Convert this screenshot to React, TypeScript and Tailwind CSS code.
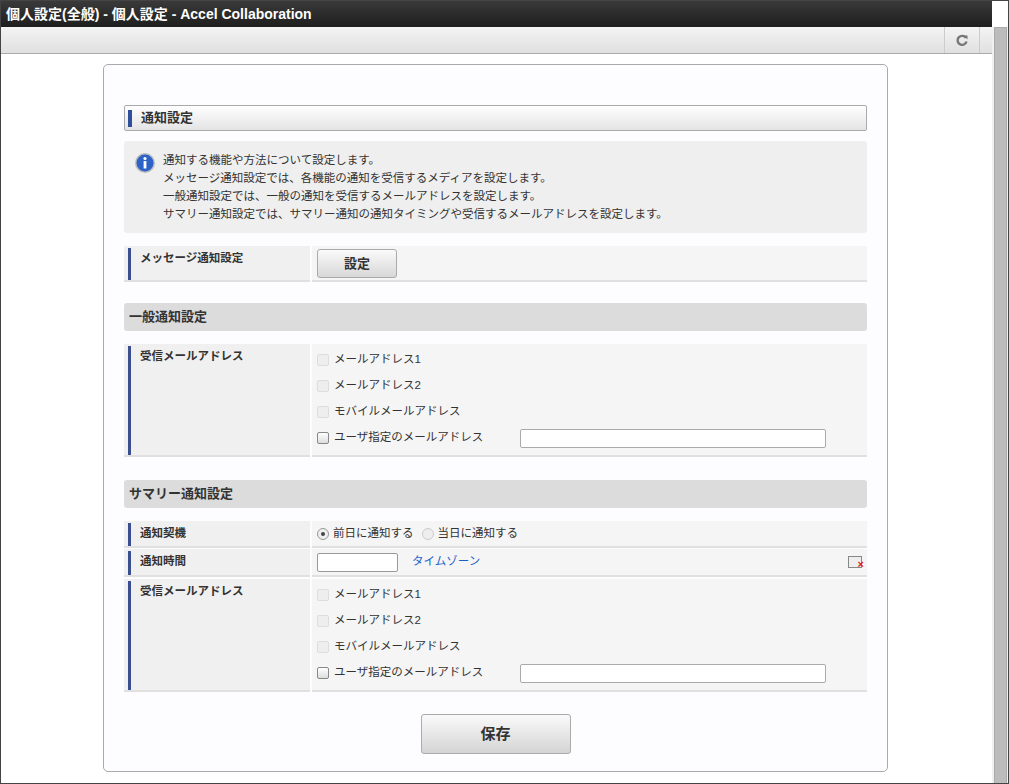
import React from "react";

const F = { fontFamily: '"Liberation Sans","Noto Sans CJK JP",sans-serif' };

function Label({ children, h }: { children: React.ReactNode; h: string }) {
  return (
    <div className={`w-[186px] shrink-0 bg-[#f0f0f0] border-b-2 border-[#e0e0e0] pl-[4px] pt-[2px] ${h}`}>
      <div className="border-l-[3px] border-[#3b4f8e] h-full pl-[9px] pt-[2px] font-bold text-[11.5px] text-[#333]">{children}</div>
    </div>
  );
}

function Check({ label, active }: { label: string; active?: boolean }) {
  return (
    <div className="flex items-center h-[26px] gap-[5px]">
      <span className={`w-[12px] h-[12px] rounded-[2px] border ${active ? "border-[#888] bg-gradient-to-b from-white to-[#ddd]" : "border-[#ddd] bg-[#eee]"}`} />
      <span className="text-[11.5px] text-[#333]">{label}</span>
    </div>
  );
}

function EmailBlock() {
  return (
    <div className="flex">
      <Label h="h-[113px]">受信メールアドレス</Label>
      <div className="flex-1 ml-[2px] bg-[#f5f5f5] border-b-2 border-[#e0e0e0] pl-[5px] pt-[3px]">
        <Check label="メールアドレス1" />
        <Check label="メールアドレス2" />
        <Check label="モバイルメールアドレス" />
        <div className="flex items-center">
          <Check label="ユーザ指定のメールアドレス" active />
          <input className="ml-[37px] w-[306px] h-[19px] bg-white border border-[#aaa] rounded-[2px]" />
        </div>
      </div>
    </div>
  );
}

function Section({ children }: { children: React.ReactNode }) {
  return (
    <div className="h-[28px] bg-[#dcdcdc] rounded-[3px] flex items-center pl-[5px] font-bold text-[13px] text-[#333]">{children}</div>
  );
}

export default function App() {
  return (
    <div style={F} className="w-[1009px] h-[784px] border border-[#444] flex flex-col overflow-hidden bg-white relative">
      <div className="h-[26px] bg-gradient-to-b from-[#3a3a3a] to-[#1e1e1e] text-white text-[14px] font-bold flex items-center pl-[5px] mr-[16px]">
        個人設定(全般) - 個人設定 - Accel Collaboration
      </div>
      <div className="flex flex-1 min-h-0">
        <div className="flex-1 flex flex-col">
          <div className="h-[27px] bg-gradient-to-b from-[#f4f4f4] to-[#e0e0e0] border-b border-[#aaa] flex justify-end">
            <div className="w-[36px] border-l border-r border-[#ccc] mr-[12px] flex items-center justify-center">
              <svg width="12" height="12" viewBox="0 0 12 12"><path d="M10 4A4.5 4.5 0 1 0 10.5 7.5" fill="none" stroke="#777" strokeWidth="2.4"/><path d="M7.5 1.5L11.5 1.5L11.5 5.5Z" fill="#777"/></svg>
            </div>
          </div>
          <div className="flex-1 pl-[102px] pt-[10px]">
            <div className="w-[785px] h-[708px] border border-[#aaa] rounded-[5px] bg-[#fdfdff] px-[20px] pt-[40px]">
              <div className="h-[26px] border border-[#aaa] rounded-[2px] bg-gradient-to-b from-white to-[#e4e4e4] flex items-center">
                <div className="w-[4px] h-[17px] bg-[#2f4f9a] ml-[3px]" />
                <span className="ml-[9px] text-[13px] font-bold text-[#333]">通知設定</span>
              </div>
              <div className="mt-[10px] h-[92px] bg-[#efefef] rounded-[3px] flex pl-[10px] pt-[10px] gap-[7px] text-[11.5px] leading-[18px] text-[#333]">
                <svg width="22" height="22" viewBox="0 0 22 22" className="shrink-0 mt-[1px]">
                  <circle cx="11" cy="11" r="10" fill="#bbb" />
                  <circle cx="11" cy="11" r="8.5" fill="#2d62c8" />
                  <circle cx="11" cy="6.5" r="1.6" fill="#fff" />
                  <rect x="9.6" y="9" width="2.8" height="7.5" fill="#fff" />
                </svg>
                <div>
                  <div>通知する機能や方法について設定します。</div>
                  <div>メッセージ通知設定では、各機能の通知を受信するメディアを設定します。</div>
                  <div>一般通知設定では、一般の通知を受信するメールアドレスを設定します。</div>
                  <div>サマリー通知設定では、サマリー通知の通知タイミングや受信するメールアドレスを設定します。</div>
                </div>
              </div>
              <div className="flex mt-[13px]">
                <Label h="h-[36px]">メッセージ通知設定</Label>
                <div className="flex-1 ml-[2px] bg-[#f5f5f5] border-b-2 border-[#e0e0e0] pl-[5px] pt-[3px]">
                  <div className="w-[80px] h-[29px] border border-[#aaa] rounded-[3px] bg-gradient-to-b from-[#fafafa] to-[#d8d8d8] flex items-center justify-center text-[13px] font-bold text-[#333]">設定</div>
                </div>
              </div>
              <div className="mt-[21px]"><Section>一般通知設定</Section></div>
              <div className="mt-[13px]"><EmailBlock /></div>
              <div className="mt-[23px]"><Section>サマリー通知設定</Section></div>
              <div className="flex mt-[13px]">
                <Label h="h-[27px]">通知契機</Label>
                <div className="flex-1 ml-[2px] bg-[#f5f5f5] border-b-2 border-[#e0e0e0] pl-[5px] flex items-center gap-[4px] text-[11.5px] text-[#333]">
                  <span className="w-[12px] h-[12px] rounded-full border border-[#999] bg-[#eee] flex items-center justify-center"><span className="w-[4px] h-[4px] rounded-full bg-[#444]" /></span>
                  <span>前日に通知する</span>
                  <span className="w-[12px] h-[12px] rounded-full border border-[#ccc] bg-[#eee] ml-[4px]" />
                  <span>当日に通知する</span>
                </div>
              </div>
              <div className="flex mt-[1px]">
                <Label h="h-[28px]">通知時間</Label>
                <div className="flex-1 ml-[2px] bg-[#f5f5f5] border-b-2 border-[#e0e0e0] pl-[5px] flex items-center text-[11.5px]">
                  <input className="w-[81px] h-[19px] bg-white border border-[#999] rounded-[2px]" />
                  <span className="ml-[14px] text-[#1a5fcc]">タイムゾーン</span>
                  <span className="ml-auto mr-[5px] relative w-[14px] h-[12px] border border-[#888] bg-[#eee]">
                    <span className="absolute -right-[3px] -bottom-[3px] text-[#e02020] text-[11px] font-bold leading-none">×</span>
                  </span>
                </div>
              </div>
              <div className="mt-[2px]"><EmailBlock /></div>
              <div className="flex justify-center mt-[22px]">
                <div className="w-[150px] h-[40px] border border-[#aaa] rounded-[3px] bg-gradient-to-b from-[#fafafa] to-[#d4d4d4] flex items-center justify-center text-[15px] font-bold text-[#333]">保存</div>
              </div>
            </div>
          </div>
        </div>
        <div className="w-[16px] bg-[#f0f0f0] flex justify-center"><div className="w-[13px] h-[765px] bg-[#bcbcbc] border border-[#aaa]" /></div>
      </div>
    </div>
  );
}
